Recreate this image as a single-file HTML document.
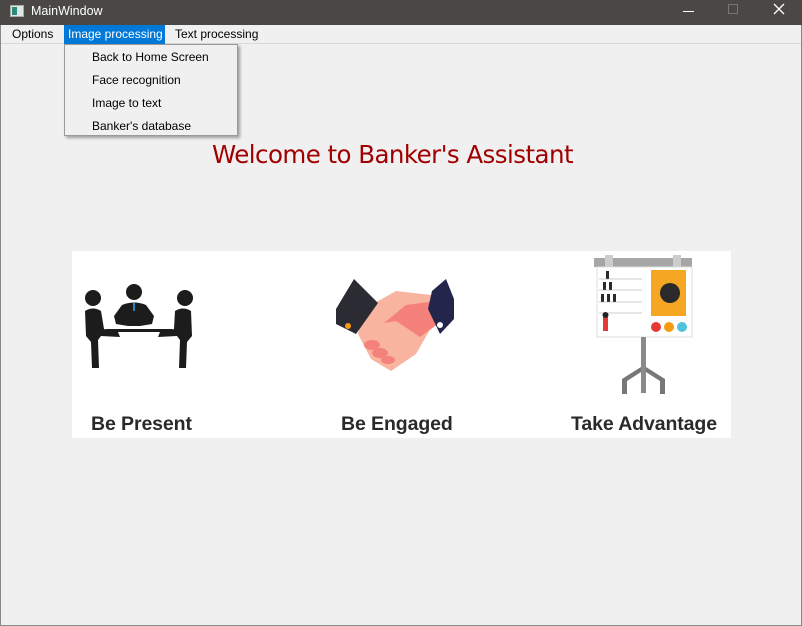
<!DOCTYPE html>
<html><head><meta charset="utf-8"><style>
*{margin:0;padding:0;box-sizing:border-box}
body{width:802px;height:626px;background:#f0f0f0;position:relative;overflow:hidden;font-family:"Liberation Sans","DejaVu Sans",sans-serif;font-size:12px;color:#000}
div{white-space:nowrap}
.title{position:absolute;left:0;top:0;width:802px;height:25px;background:#494844;color:#fff}
.title .t{position:absolute;left:31px;top:4px;font-size:12.5px}
.title .ic{position:absolute;left:10px;top:5px;width:14px;height:12px;background:#dfe6e6;border:1px solid #aaa}
.title .ic:before{content:"";position:absolute;left:1px;top:1px;width:5px;height:8px;background:#2d8a7a}
.menubar{position:absolute;left:1px;top:25px;width:800px;height:19px;border-bottom:1px solid #d9d9d9;background:#f0f0f0}
.mi{position:absolute;top:0;height:19px;line-height:19px;font-size:12px;letter-spacing:0}
.drop{position:absolute;left:64px;top:44px;width:174px;height:92px;background:#f0f0f0;border:1px solid #999;box-shadow:2px 2px 3px rgba(0,0,0,.35)}
.drop div{position:absolute;left:27px;font-size:12px;letter-spacing:0}
.welcome{position:absolute;left:212px;top:140px;font-family:"DejaVu Sans",sans-serif;font-size:24.5px;color:#a00000;letter-spacing:-0.55px}
.panel{position:absolute;left:72px;top:251px;width:659px;height:187px;background:#fff}
.lab{position:absolute;top:162px;font-family:"Liberation Sans",sans-serif;font-weight:bold;font-size:19.5px;color:#2a2a2a;letter-spacing:-0.1px}
.frame{position:absolute;left:0;top:25px;width:802px;height:601px;border:1px solid #888;border-top:none}
</style></head><body>
<div class="title"><div class="ic"></div><div class="t">MainWindow</div>
<div style="position:absolute;left:683px;top:11px;width:11px;height:1px;background:#fff"></div>
<div style="position:absolute;left:728px;top:4px;width:10px;height:10px;border:1px solid #777"></div>
<svg style="position:absolute;left:773px;top:3px" width="12" height="12"><path d="M1 1L11 11M11 1L1 11" stroke="#fff" stroke-width="1.3"/></svg>
</div>
<div class="frame"></div>
<div class="menubar">
<div class="mi" style="left:11px">Options</div>
<div class="mi" style="left:63px;background:#0078d7;color:#fff;width:101px;padding-left:4px">Image processing</div>
<div class="mi" style="left:174px">Text processing</div>
</div>
<div class="drop">
<div style="top:5px">Back to Home Screen</div>
<div style="top:28px">Face recognition</div>
<div style="top:51px">Image to text</div>
<div style="top:74px">Banker's database</div>
</div>
<div class="welcome">Welcome to Banker's Assistant</div>
<div class="panel">
<svg style="position:absolute;left:10px;top:33px" width="115" height="88" viewBox="0 0 115 88">
<g fill="#1c1c1c">
<circle cx="11" cy="14" r="8"/><circle cx="52" cy="8" r="8"/><circle cx="103" cy="14" r="8"/>
<path d="M3 27 Q11 22 19 27 L22 45 L36 48 L38 53 L19 52 L16 56 L17 84 L10 84 L9 58 L4 52 Z"/>
<path d="M93 27 Q101 22 109 27 L110 52 L105 58 L104 84 L97 84 L98 56 L95 52 L76 53 L78 48 L92 45 Z"/>
<path d="M40 21 Q52 16 64 21 L72 32 L70 40 L58 42 L46 42 L34 40 L32 32 Z"/>
<rect x="24" y="45" width="66" height="3"/>
</g><rect x="51" y="19" width="2" height="8" fill="#2e86c1"/>
</svg>
<svg style="position:absolute;left:264px;top:28px" width="120" height="95" viewBox="0 0 120 95">
<path d="M28 30 L60 12 L95 16 L100 40 L80 75 L55 92 L35 80 L22 55 Z" fill="#f9b4a0"/>
<path d="M48 44 L70 26 L100 22 L106 42 L84 58 L60 42 Z" fill="#f4817a"/>
<g fill="#f4817a"><ellipse cx="36" cy="66" rx="8" ry="5"/><ellipse cx="44" cy="74" rx="8" ry="5"/><ellipse cx="52" cy="81" rx="7" ry="4"/></g>
<path d="M0 30 L18 0 L42 24 L20 55 L0 45 Z" fill="#2b2b33"/>
<path d="M96 12 L110 0 L118 20 L118 40 L104 55 L92 30 Z" fill="#23264a"/>
<circle cx="12" cy="47" r="3" fill="#f39c12"/><circle cx="104" cy="46" r="3" fill="#fff"/>
</svg>
<svg style="position:absolute;left:522px;top:3px" width="100" height="145" viewBox="0 0 100 145">
<rect x="0" y="4" width="98" height="9" fill="#a6a6a6"/>
<rect x="11" y="1" width="8" height="14" fill="#ccc"/><rect x="79" y="1" width="8" height="14" fill="#ccc"/>
<rect x="3" y="13" width="95" height="70" fill="#fff" stroke="#ddd"/>
<rect x="57" y="16" width="35" height="46" fill="#f5a623"/>
<circle cx="76" cy="39" r="10" fill="#2a2a2a"/>
<g fill="#2a2a2a"><rect x="12" y="17" width="3" height="8"/><rect x="9" y="28" width="3" height="8"/><rect x="15" y="28" width="3" height="8"/><rect x="7" y="40" width="3" height="8"/><rect x="13" y="40" width="3" height="8"/><rect x="19" y="40" width="3" height="8"/></g>
<g stroke="#999" stroke-width=".6"><line x1="5" y1="25" x2="48" y2="25"/><line x1="5" y1="36" x2="48" y2="36"/><line x1="5" y1="48" x2="48" y2="48"/><line x1="5" y1="59" x2="48" y2="59"/></g>
<rect x="9" y="63" width="5" height="14" fill="#e53935"/><circle cx="11.5" cy="61" r="3" fill="#222"/>
<circle cx="62" cy="73" r="5" fill="#e53935"/><circle cx="75" cy="73" r="5" fill="#f39c12"/><circle cx="88" cy="73" r="5" fill="#4fc3d9"/>
<rect x="47" y="83" width="5" height="56" fill="#8a8a8a"/>
<path d="M28 140 L28 125 L47 113 L47 118 L33 127 L33 140 Z M71 140 L71 125 L52 113 L52 118 L66 127 L66 140 Z" fill="#777"/>
</svg>
<div class="lab" style="left:19px">Be Present</div>
<div class="lab" style="left:269px">Be Engaged</div>
<div class="lab" style="left:499px">Take Advantage</div>
</div>
</body></html>
